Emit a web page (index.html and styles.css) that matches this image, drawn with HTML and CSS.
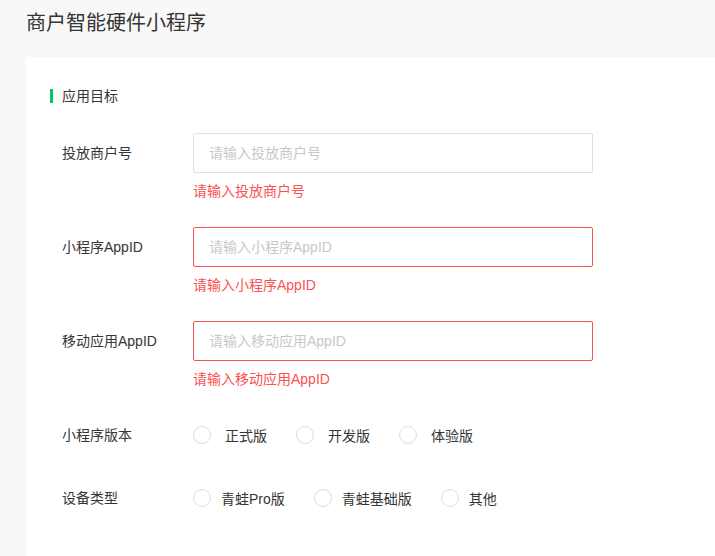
FILE: index.html
```html
<!DOCTYPE html>
<html lang="zh-CN">
<head>
    <meta charset="UTF-8">
    <meta name="viewport" content="width=device-width, initial-scale=1.0">
    <title>商户智能硬件小程序</title>
    <link rel="stylesheet" href="styles.css">
</head>
<body>
    <div class="page">
        <h1 class="page-title">商户智能硬件小程序</h1>

        <div class="card">
            <div class="section-title">应用目标</div>

            <form class="form">
                <div class="form-item">
                    <label class="form-label" for="mchId">投放商户号</label>
                    <div class="form-control">
                        <input type="text" id="mchId" class="input" placeholder="请输入投放商户号">
                        <div class="error-message">请输入投放商户号</div>
                    </div>
                </div>

                <div class="form-item">
                    <label class="form-label" for="miniAppId">小程序AppID</label>
                    <div class="form-control">
                        <input type="text" id="miniAppId" class="input input-error" placeholder="请输入小程序AppID">
                        <div class="error-message">请输入小程序AppID</div>
                    </div>
                </div>

                <div class="form-item">
                    <label class="form-label" for="mobileAppId">移动应用AppID</label>
                    <div class="form-control">
                        <input type="text" id="mobileAppId" class="input input-error" placeholder="请输入移动应用AppID">
                        <div class="error-message">请输入移动应用AppID</div>
                    </div>
                </div>

                <div class="form-item form-item-radio">
                    <span class="form-label">小程序版本</span>
                    <div class="radio-group radio-group-wide">
                        <label class="radio"><span class="radio-circle"></span>正式版</label>
                        <label class="radio"><span class="radio-circle"></span>开发版</label>
                        <label class="radio"><span class="radio-circle"></span>体验版</label>
                    </div>
                </div>

                <div class="form-item form-item-radio">
                    <span class="form-label">设备类型</span>
                    <div class="radio-group">
                        <label class="radio"><span class="radio-circle"></span>青蛙Pro版</label>
                        <label class="radio"><span class="radio-circle"></span>青蛙基础版</label>
                        <label class="radio"><span class="radio-circle"></span>其他</label>
                    </div>
                </div>
            </form>
        </div>
    </div>
</body>
</html>
```

FILE: styles.css
```css
html, body {
    margin: 0;
    padding: 0;
    height: 100%;
    overflow: hidden;
}

body {
    font-family: "Liberation Sans", "Noto Sans CJK SC", sans-serif;
    background: #f8f8f8;
    color: #353535;
    font-size: 14px;
}

.page {
    box-sizing: border-box;
    height: 100%;
    padding: 9px 0 0 26px;
    display: flex;
    flex-direction: column;
}

.page-title {
    margin: 0 0 20px;
    font-size: 20px;
    line-height: 28px;
    font-weight: normal;
    color: #353535;
}

.card {
    flex: 1;
    background: #fff;
    border-radius: 4px 0 0 0;
    padding: 29px 24px 0;
}

.section-title {
    display: flex;
    align-items: center;
    line-height: 20px;
    margin-bottom: 27px;
}

.section-title::before {
    content: "";
    width: 3px;
    height: 14px;
    background: #07c160;
    margin-right: 9px;
}

.form-item {
    display: flex;
    align-items: flex-start;
    padding-left: 12px;
    margin-bottom: 26px;
}

.form-label {
    width: 131px;
    line-height: 40px;
    flex-shrink: 0;
}

.form-control {
    width: 400px;
}

.input {
    display: block;
    width: 100%;
    height: 40px;
    box-sizing: border-box;
    padding: 0 15px;
    border: 1px solid #e0e0e0;
    border-radius: 2px;
    font-family: inherit;
    font-size: 14px;
    color: #353535;
    outline: none;
}

.input::placeholder {
    color: #c8c8c8;
}

.input-error {
    border-color: #fa5151;
}

.error-message {
    margin-top: 8px;
    line-height: 20px;
    color: #fa5151;
}

.form-item-radio {
    margin-bottom: 23px;
}

.form-item-radio:last-child {
    margin-bottom: 0;
}

.radio-group {
    display: flex;
    align-items: center;
    height: 40px;
}

.radio {
    display: flex;
    align-items: center;
    margin-right: 29px;
    cursor: pointer;
}

.radio-circle {
    width: 18px;
    height: 18px;
    box-sizing: border-box;
    border: 1px solid #dcdcdc;
    border-radius: 50%;
    margin-right: 10px;
}

.radio-group-wide .radio-circle {
    margin-right: 14px;
}
```
